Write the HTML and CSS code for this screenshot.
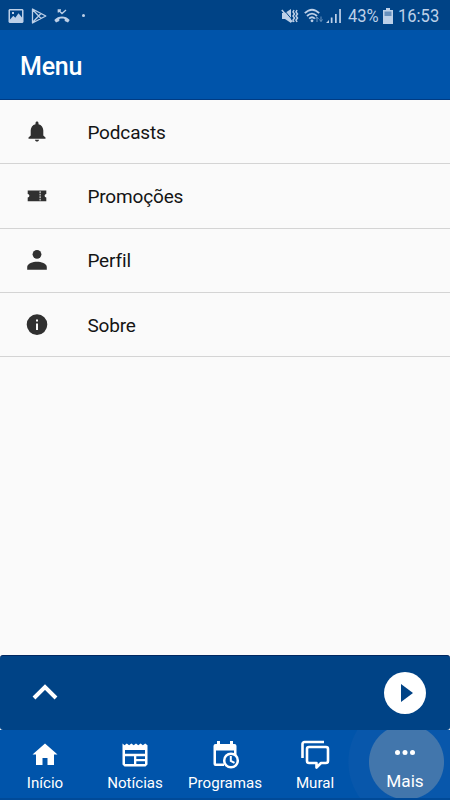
FILE: index.html
```html
<!DOCTYPE html>
<html lang="pt-BR">
<head>
    <meta charset="UTF-8">
    <meta name="viewport" content="width=device-width, initial-scale=1.0">
    <title>Menu</title>
    <link rel="stylesheet" href="styles.css">
</head>
<body>
    <div class="status-bar">
        <div class="status-left">
            <svg width="16" height="16" viewBox="0 0 16 16"><path fill-rule="evenodd" d="M1.500 1h13l1 1v12l-1 1h-13l-1-1V2zM2 2.600v9l3.300-3.800 2 2 3.200-4.500L14 9.600v-7zM4 4h2v2H4z"/></svg>
            <svg width="16" height="18" viewBox="0 0 16 18"><path d="M1.500 2v14L14.800 9zM1.500 2.500l8.500 9M1.500 15.500l8.500-9" fill="none" stroke="#bdd0e8" stroke-width="1.300" stroke-linejoin="round"/></svg>
            <svg width="16" height="16" viewBox="0 0 16 16"><path d="M.3 12c4.300-4.600 11.100-4.600 15.400 0L14 14.400l-3.300-1.500v-2c-1.800-.6-3.600-.6-5.400 0v2L2 14.400z"/><path d="M4.300 4.500V2H7M4.300 2L8 5.500 12 2" fill="none" stroke="#bdd0e8" stroke-width="1.300"/></svg>
            <span class="dot"></span>
        </div>
        <div class="status-right">
            <svg width="18" height="16" viewBox="0 0 18 16"><path d="M1 5h3l6-4v14l-6-4H1z"/><path d="M2 .8l10 12" stroke="#004386" stroke-width="1"/><path d="M.8 2l10.500 12M13 2l-1 2 1.500 2-1.500 2 1.500 2-1.500 2 1 2M16 2l-1 2 1.500 2-1.500 2 1.500 2-1.500 2 1 2" fill="none" stroke="#bdd0e8" stroke-width="1.500"/></svg>
            <svg class="wifi" width="20" height="16" viewBox="0 0 20 16"><g fill="none" stroke="#bdd0e8" stroke-width="1.800"><path d="M.8 5.200q7.200-7 14.400 0M3 8q5-4.800 10 0M5.200 10.600q2.800-2.600 5.600 0"/></g><circle cx="8" cy="12.800" r="1.400"/><path d="M13 14V9m-1.500 2L13 9l1.500 2M17 8.500v5m-1.500-2l1.500 2 1.500-2" fill="none" stroke="#6993bf"/></svg>
            <svg class="signal" width="16" height="16" viewBox="0 0 16 16"><path d="M0 15l3-3v3zM4.800 9.500h1.700V15H4.800zM9 6h1.700v9H9zM13.200 1h1.700v14h-1.700z"/></svg>
            <span class="percent">43%</span>
            <svg class="battery" width="10" height="16" viewBox="0 0 10 16"><path d="M3 0h4v2h3v14H0V2h3z"/><path d="M1.500 3.500h7V8h-7z" fill="#6790bd"/></svg>
            <span class="clock">16:53</span>
        </div>
    </div>

    <header class="header">
        <h1>Menu</h1>
    </header>

    <main class="menu">
        <div class="menu-item">
            <svg width="24" height="24" viewBox="0 0 24 24"><path d="M12 21.500c1.100 0 2-.8 2-1.800h-4c0 1 .9 1.800 2 1.800zM18.300 15.500v-5c0-3.070-1.800-5.640-4.800-6.320V3c0-.83-.67-1.500-1.500-1.500s-1.500.67-1.500 1.500v1.180C7.500 4.860 5.700 7.420 5.700 10.500v5l-2.200 2v1.300h17v-1.300z"/></svg>
            <span>Podcasts</span>
        </div>
        <div class="menu-item">
            <svg width="24" height="24" viewBox="0 0 24 24"><path fill-rule="evenodd" d="M2.700 6.500h18.600v3.500a1.700 1.700 0 0 0 0 3.400v3.800H2.700v-3.800a1.700 1.700 0 0 0 0-3.400zM14.600 7.300v1.600h1V7.300zM14.600 9.800v1.600h1V9.800zM14.600 12.300v1.600h1v-1.600zM14.600 14.800v1.600h1v-1.600z"/></svg>
            <span>Promoções</span>
        </div>
        <div class="menu-item">
            <svg width="24" height="24" viewBox="0 0 24 24"><circle cx="12" cy="6.300" r="4.400"/><path d="M2.200 21.700V19c0-3.500 5.800-5.300 9.800-5.300s9.800 1.800 9.800 5.300v2.700z"/></svg>
            <span>Perfil</span>
        </div>
        <div class="menu-item">
            <svg width="24" height="24" viewBox="0 0 24 24"><path fill-rule="evenodd" d="M12 1.300a10.300 10.300 0 1 0 0 20.600 10.300 10.300 0 0 0 0-20.600zM11 6.500h2v2h-2zM11 10.500h2V17h-2z"/></svg>
            <span>Sobre</span>
        </div>
    </main>

    <div class="player">
        <svg width="26" height="18" viewBox="0 0 26 18"><path d="M2 14L13 3l11 11" fill="none" stroke="#fff" stroke-width="4"/></svg>
        <button class="play-btn" aria-label="Play">
            <svg width="42" height="42" viewBox="0 0 42 42"><path d="M17 12v18l12-9z"/></svg>
        </button>
    </div>

    <nav class="tabs">
        <a class="tab">
            <svg width="30" height="30" viewBox="0 0 30 30"><path d="M12.500 25v-7h5v7H24V14.500h3.500L15 3.500 2.500 14.500H6V25z"/></svg>
            <span>Início</span>
        </a>
        <a class="tab">
            <svg width="30" height="30" viewBox="0 0 30 30"><path fill-rule="evenodd" d="M2.500 3.500l2 1.800 2.300-1.800 2.300 1.800 2.300-1.800 2.300 1.800L16 3.500l2.300 1.800 2.300-1.800 2.300 1.800 2.300-1.800 2.300 1.800V24.500l-2 2h-21l-2-2zM5 10v3.700h20V10zM5 16.200V24h9v-7.800zM16.300 16.200v2.800H25v-2.800zM16.300 21.200V24H25v-2.800z"/></svg>
            <span>Notícias</span>
        </a>
        <a class="tab">
            <svg width="30" height="30" viewBox="0 0 30 30"><path d="M14 26H5.500A2 2 0 0 1 3.500 24V6a2 2 0 0 1 2-2h19a2 2 0 0 1 2 2v9H24v-4.500H6v13h8zM7 1h3v5H7zM20 1h3v5h-3z"/><circle cx="21" cy="20.500" r="6.800" fill="#0054aa" stroke="#fff" stroke-width="2.500"/><path d="M20.800 16v4.800l3.700 2" fill="none" stroke="#fff" stroke-width="2"/></svg>
            <span>Programas</span>
        </a>
        <a class="tab">
            <svg width="30" height="30" viewBox="0 0 30 30"><g fill="none" stroke="#fff" stroke-width="2.600" stroke-linejoin="round"><path d="M2.500 18V4a2 2 0 0 1 2-2H24"/><path d="M9 7h17a2 2 0 0 1 2 2v12a2 2 0 0 1-2 2h-5l-4.500 4.500V23H9a2 2 0 0 1-2-2V9a2 2 0 0 1 2-2z"/></g></svg>
            <span>Mural</span>
        </a>
        <a class="tab active">
            <svg width="30" height="30" viewBox="0 0 30 30"><circle cx="7.500" cy="12.500" r="2.500"/><circle cx="15" cy="12.500" r="2.500"/><circle cx="22.500" cy="12.500" r="2.500"/></svg>
            <span>Mais</span>
        </a>
    </nav>
</body>
</html>
```
FILE: styles.css
```css
* {
    box-sizing: border-box;
}

body {
    margin: 0;
    height: 800px;
    display: flex;
    flex-direction: column;
    background-color: #fafafa;
    font-family: Roboto, "Liberation Sans", sans-serif;
    overflow: hidden;
}

svg {
    display: block;
    flex: none;
}

/* Status bar */
.status-bar {
    height: 30px;
    flex: none;
    padding: 1px 10px 0 8px;
    display: flex;
    align-items: center;
    justify-content: space-between;
    background-color: #004386;
    color: #bdd0e8;
    fill: #bdd0e8;
}

.status-left,
.status-right {
    display: flex;
    align-items: center;
}

.status-left {
    gap: 7px;
}

.dot {
    width: 3px;
    height: 3px;
    margin-left: 5px;
    border-radius: 50%;
    background-color: #bdd0e8;
}

.wifi {
    margin-left: 5px;
}

.signal {
    margin-left: 2px;
}

.percent,
.clock {
    font-size: 18px;
    line-height: 28px;
    white-space: nowrap;
    transform: scaleX(0.92);
    transform-origin: left;
}

.percent {
    width: 30px;
    margin-left: 6px;
}

.battery {
    margin-left: 5px;
}

.clock {
    width: 42px;
    margin-left: 5px;
}

/* Header */
.header {
    height: 70px;
    flex: none;
    padding: 4px 20px 0;
    display: flex;
    align-items: center;
    background-color: #0054aa;
    border-bottom: 1px solid #003b83;
}

.header h1 {
    margin: 0;
    color: #fff;
    font-size: 25px;
    font-weight: 500;
    letter-spacing: -0.2px;
}

/* Menu list */
.menu {
    flex: 1;
}

.menu-item {
    height: 64.3px;
    padding-left: 25.4px;
    display: flex;
    align-items: center;
    gap: 38px;
    border-bottom: 1px solid #d4d4d4;
    color: #141414;
    fill: #303030;
    font-size: 19px;
    letter-spacing: -0.15px;
}

.menu-item span {
    padding-top: 1px;
}

/* Player */
.player {
    height: 75px;
    flex: none;
    padding: 0 24px 0 32px;
    display: flex;
    align-items: center;
    justify-content: space-between;
    background-color: #004386;
    border-top: 1px solid #002760;
    border-radius: 3px;
}

.play-btn {
    width: 42px;
    height: 42px;
    padding: 0;
    border: none;
    border-radius: 50%;
    background-color: #fff;
    fill: #004386;
}

/* Bottom tabs */
.tabs {
    height: 70px;
    flex: none;
    display: grid;
    grid-template-columns: repeat(5, 1fr);
    background: radial-gradient(circle 62px at 410px 32px, #0857ab 61px, #0054aa 62px);
    border-bottom: 2px solid #004a98;
    overflow: hidden;
}

.tab {
    padding-top: 10px;
    display: flex;
    flex-direction: column;
    align-items: center;
    color: #fff;
    fill: #fff;
    font-size: 15.1px;
    line-height: 26px;
}

.tab.active {
    background: radial-gradient(circle 38px at 46.500px 32px, #4276ac 37px, transparent 38px);
    font-size: 17.2px;
    line-height: 23px;
}
```
